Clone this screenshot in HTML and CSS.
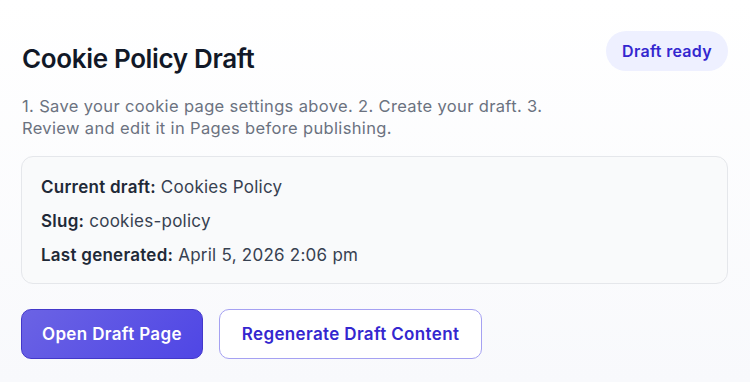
FILE: index.html
```
<!DOCTYPE html>
<html lang="en">
<head>
  <meta charset="UTF-8" />
  <meta name="viewport" content="width=device-width, initial-scale=1.0"/>
  <title>Cookie Policy Draft</title>
  <link rel="stylesheet" href="styles.css">
</head>
<body>
  <div class="panel">
    <div class="panel-head">
      <h2>Cookie Policy Draft</h2>
      <span class="badge">Draft ready</span>
    </div>
    <p class="intro">1. Save your cookie page settings above. 2. Create your draft. 3. Review and edit it in Pages before publishing.</p>

    <div class="draft-info">
      <div class="info-row"><strong>Current draft:</strong> Cookies Policy</div>
      <div class="info-row"><strong>Slug:</strong> cookies-policy</div>
      <div class="info-row"><strong>Last generated:</strong> April 5, 2026 2:06 pm</div>
    </div>

    <div class="actions">
      <button type="button" class="btn btn-primary">Open Draft Page</button>
      <button type="button" class="btn btn-outline">Regenerate Draft Content</button>
    </div>
  </div>
</body>
</html>
```

FILE: styles.css
```
:root {
  --text: #1f2937;
  --muted: #6b7280;
  --accent: #4f46e5;
  --accent-text: #3427cf;
  --border: #e5e7eb;
  --box-bg: #f9fafb;
}

html, body {
  height: 100%;
}

body {
  margin: 0;
  font-family: 'Inter', 'Noto Sans', sans-serif;
  color: var(--text);
  background: linear-gradient(180deg, #ffffff 0%, #f8f9fc 100%);
}

.panel {
  padding: 31px 22px 0 21px;
}

.panel-head {
  display: flex;
  justify-content: space-between;
  align-items: flex-start;
}

h2 {
  margin: 13px 0 0 1px;
  font-size: 26px;
  line-height: 30px;
  font-weight: 600;
  color: #111827;
  letter-spacing: -0.35px;
}

.badge {
  display: inline-block;
  height: 40px;
  line-height: 40px;
  padding: 0 16px;
  border-radius: 999px;
  background: #eef0ff;
  color: var(--accent-text);
  font-size: 16px;
  font-weight: 600;
  letter-spacing: 0.3px;
}

.intro {
  margin: 21px 0 17px 1px;
  max-width: 560px;
  font-size: 16.5px;
  line-height: 22px;
  letter-spacing: 0.35px;
  color: var(--muted);
}

.draft-info {
  border: 1px solid var(--border);
  border-radius: 12px;
  background: var(--box-bg);
  padding: 18px 19px 16px;
  display: flex;
  flex-direction: column;
  gap: 10px;
}

.info-row {
  font-size: 17px;
  line-height: 24px;
  letter-spacing: 0.25px;
  color: #374151;
}

.info-row strong {
  font-weight: 600;
  color: var(--text);
}

.actions {
  display: flex;
  gap: 16px;
  margin-top: 25px;
}

.btn {
  font-family: inherit;
  font-size: 17px;
  font-weight: 600;
  line-height: 22px;
  letter-spacing: 0.35px;
  padding: 13px 20px;
  border-radius: 10px;
  cursor: pointer;
}

.btn-primary {
  color: #fff;
  border: 1px solid #4338ca;
  background: linear-gradient(135deg, #6b63e4 0%, #4f46e5 100%);
}

.btn-outline {
  padding: 13px 22px;
  color: var(--accent-text);
  background: #fff;
  border: 1px solid #a5a1f2;
}
```
